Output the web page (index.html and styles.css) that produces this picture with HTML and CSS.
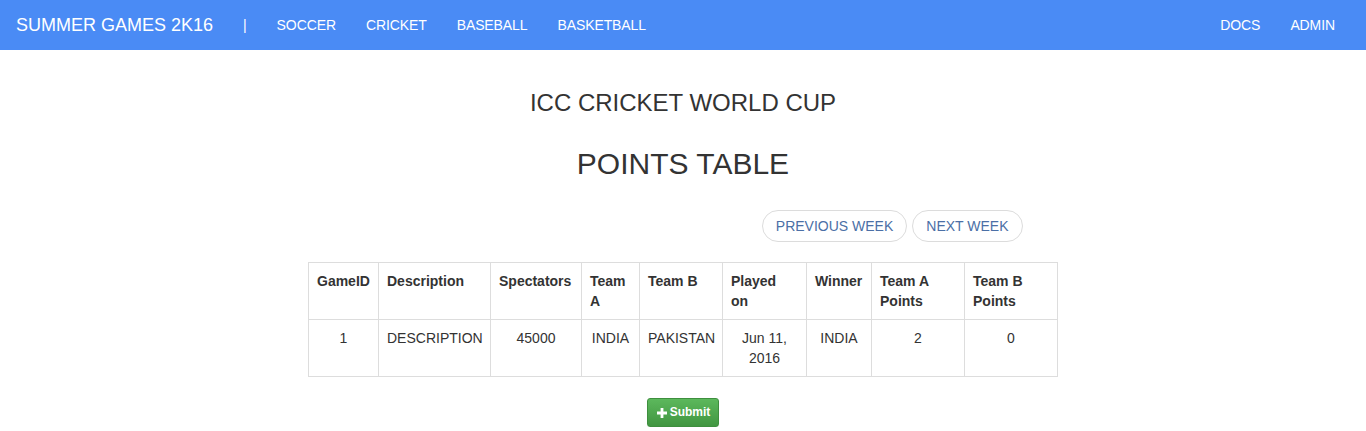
FILE: index.html
```html
<!DOCTYPE html>
<html>
<head>
<meta charset="utf-8">
<link rel="stylesheet" href="styles.css">
</head>
<body>
<nav class="navbar">
  <div class="nav-left">
    <span class="brand">SUMMER GAMES 2K16</span>
    <span class="nav-link sep">|</span>
    <a class="nav-link">SOCCER</a>
    <a class="nav-link">CRICKET</a>
    <a class="nav-link">BASEBALL</a>
    <a class="nav-link">BASKETBALL</a>
  </div>
  <div class="nav-right">
    <a class="nav-link">DOCS</a>
    <a class="nav-link">ADMIN</a>
  </div>
</nav>
<main class="content">
  <h3 class="subtitle">ICC CRICKET WORLD CUP</h3>
  <h2 class="title">POINTS TABLE</h2>
  <div class="week-nav">
    <button class="pill">PREVIOUS WEEK</button>
    <button class="pill">NEXT WEEK</button>
  </div>
  <table class="points">
    <colgroup>
      <col class="c-id"><col class="c-desc"><col class="c-spec"><col class="c-ta"><col class="c-tb"><col class="c-play"><col class="c-win"><col class="c-pa"><col class="c-pb">
    </colgroup>
    <thead>
      <tr>
        <th>GameID</th><th>Description</th><th>Spectators</th><th>Team A</th><th>Team B</th><th class="wrap">Played on</th><th>Winner</th><th>Team A Points</th><th>Team B Points</th>
      </tr>
    </thead>
    <tbody>
      <tr>
        <td>1</td><td>DESCRIPTION</td><td>45000</td><td>INDIA</td><td>PAKISTAN</td><td>Jun 11, 2016</td><td>INDIA</td><td>2</td><td>0</td>
      </tr>
    </tbody>
  </table>
  <div class="actions">
    <button class="submit"><svg class="plus" width="10" height="10" viewBox="0 0 10 10"><path d="M3.6 0h2.8v3.6H10v2.8H6.4V10H3.6V6.4H0V3.6h3.6z" fill="#fff"/></svg>Submit</button>
  </div>
</main>
</body>
</html>
```
FILE: styles.css
```css
* { box-sizing: border-box; }
html, body { margin: 0; padding: 0; }
body {
  font-family: "Liberation Sans", Arial, sans-serif;
  font-size: 14px;
  line-height: 1.42857;
  color: #333;
  background: #fff;
}
.navbar {
  height: 50px;
  background: #4a8bf5;
  display: flex;
  justify-content: space-between;
  align-items: stretch;
  padding: 0 16px;
}
.nav-left, .nav-right { display: flex; align-items: center; }
.brand {
  font-size: 18px;
  line-height: 20px;
  color: #fff;
  padding: 15px 15px 15px 0;
}
.nav-link {
  color: #fff;
  font-size: 14px;
  line-height: 20px;
  padding: 15px;
  letter-spacing: -0.1px;
  text-decoration: none;
}
.content {
  display: flex;
  flex-direction: column;
  align-items: center;
  padding-top: 40px;
}
.subtitle {
  font-size: 24px;
  font-weight: 500;
  line-height: 1.1;
  margin: 0 0 31px;
}
.title {
  font-size: 30px;
  font-weight: 500;
  line-height: 1.1;
  margin: 0 0 30px;
}
.week-nav {
  width: 749px;
  display: flex;
  justify-content: flex-end;
  gap: 5px;
  padding-right: 35px;
  margin-bottom: 20px;
}
.pill {
  font-family: inherit;
  font-size: 14px;
  line-height: 20px;
  color: #4b6fa6;
  background: #fff;
  border: 1px solid #dcdcdc;
  border-radius: 16px;
  padding: 5px 13px;
  height: 32px;
}
.points {
  width: 749px;
  table-layout: fixed;
  border-collapse: collapse;
  border: 1px solid #ddd;
  margin-bottom: 21px;
}
.c-id { width: 70px; }
.c-desc { width: 112px; }
.c-spec { width: 91px; }
.c-ta { width: 58px; }
.c-tb { width: 83px; }
.c-play { width: 84px; }
.c-win { width: 65px; }
.c-pa { width: 93px; }
.c-pb { width: 93px; }
.points th, .points td {
  border: 1px solid #ddd;
  padding: 8px;
  line-height: 20px;
  vertical-align: top;
}
.points th {
  text-align: left;
  font-weight: bold;
}
.points th.wrap { padding-right: 20px; }
.points td { text-align: center; }
.actions { display: flex; justify-content: center; }
.submit {
  font-family: inherit;
  font-size: 12px;
  font-weight: bold;
  line-height: 17px;
  color: #fff;
  background: linear-gradient(#5cb85c, #419641);
  border: 1px solid #3e8f3e;
  border-radius: 3px;
  padding: 5px 8px 5px 9px;
  display: flex;
  align-items: center;
  gap: 3px;
  box-shadow: 0 1px 1px rgba(0,0,0,.075);
}
.plus { display: block; }
```
